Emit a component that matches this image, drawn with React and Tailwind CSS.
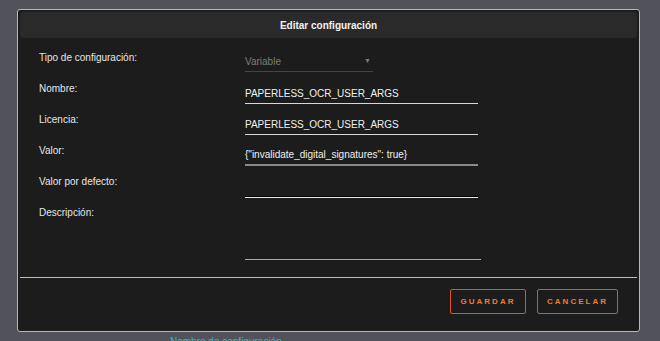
import React from "react";

function Row({ label, children }) {
  return (
    <div className="flex h-[31px]">
      <div className="w-[206px] pt-[1px] text-[10px] leading-[14px] text-[#e6e6e6]">{label}</div>
      <div className="flex-1">{children}</div>
    </div>
  );
}

export default function App() {
  return (
    <div
      className="w-[660px] h-[341px] overflow-hidden bg-[#52525a] pt-[9px] pl-[17px]"
      style={{ fontFamily: '"Liberation Sans", Arial, sans-serif' }}
    >
      <div className="w-[623px] h-[323px] border border-[#b8b8b8] rounded-[3px] bg-[#1c1c1c] p-[2px] flex flex-col">
        <div className="h-[26px] bg-[#2a2a2a] rounded-[4px] flex items-center justify-center text-[10px] font-bold text-[#f2f2f2]">
          Editar configuración
        </div>
        <div className="pl-[19px] pt-[12px] h-[239px]">
          <Row label="Tipo de configuración:">
            <div className="w-[128px] h-[22px] border-b border-[#444] flex items-center justify-between pt-[2px] text-[10px] text-[#7c7c7c]">
              <span>Variable</span>
              <span className="text-[7px] pr-[2px]">▼</span>
            </div>
          </Row>
          <Row label="Nombre:">
            <div className="w-[233px] h-[23px] border-b border-[#d8d8d8] flex items-center pt-[2px] text-[10px] text-[#f0f0f0]">
              PAPERLESS_OCR_USER_ARGS
            </div>
          </Row>
          <Row label="Licencia:">
            <div className="w-[233px] h-[23px] border-b border-[#d8d8d8] flex items-center pt-[2px] text-[10px] text-[#f0f0f0]">
              PAPERLESS_OCR_USER_ARGS
            </div>
          </Row>
          <Row label="Valor:">
            <div className="w-[233px] h-[23px] border-b-2 border-[#8a8a8a] flex items-center pt-[1px] text-[10px] text-[#f0f0f0]">
              {'{"invalidate_digital_signatures": true}'}
            </div>
          </Row>
          <Row label="Valor por defecto:">
            <div className="w-[233px] h-[23px] border-b border-black shadow-[0_1px_0_#ececec]"></div>
          </Row>
          <Row label="Descripción:">
            <div className="w-[236px] h-[55px] border-b border-[#a8a8a8]"></div>
          </Row>
        </div>
        <div className="h-[1px] bg-[#bdbdbd]"></div>
        <div className="flex justify-end gap-[11px] pt-[11px] pr-[19px]">
          <button className="w-[76px] h-[25px] border border-[#e0531f] rounded-[2px] text-[8px] font-bold tracking-[2px] text-[#f07c2c]">
            GUARDAR
          </button>
          <button className="w-[81px] h-[25px] border border-[#e0531f] rounded-[2px] text-[8px] font-bold tracking-[2px] text-[#f07c2c]">
            CANCELAR
          </button>
        </div>
      </div>
      <div className="pl-[153px] mt-[4px] text-[10px] text-[#3fb2c4] leading-[12px]">
        Nombre de configuración
      </div>
    </div>
  );
}
